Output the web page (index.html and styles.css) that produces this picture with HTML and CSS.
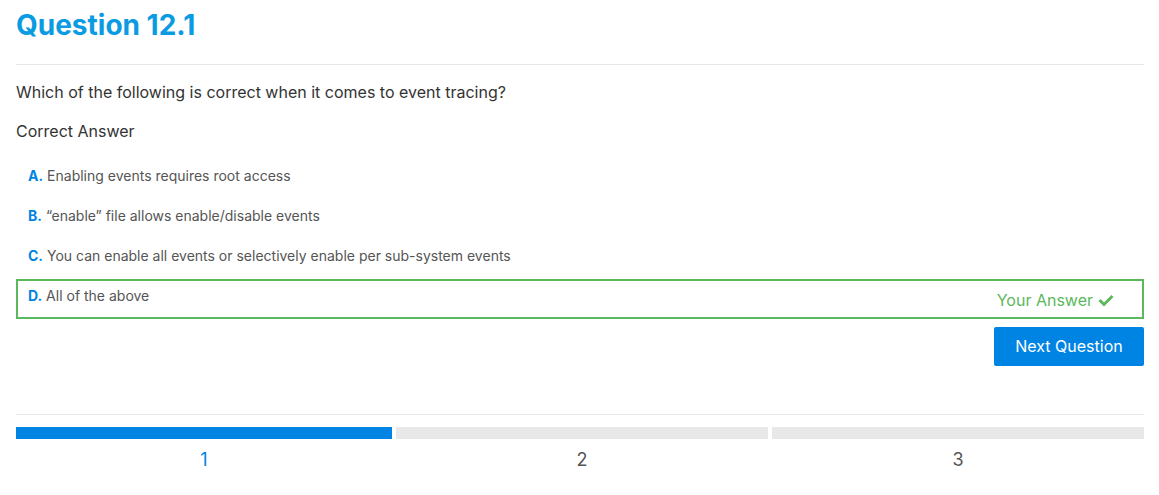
FILE: index.html
```html
<!DOCTYPE html>
<html>
<head>
<meta charset="utf-8">
<link rel="stylesheet" href="styles.css">
</head>
<body>
<div class="quiz">
  <header class="quiz-header">
    <h1 class="quiz-title">Question 12.1</h1>
  </header>
  <p class="question">Which of the following is correct when it comes to event tracing?</p>
  <p class="answer-label">Correct Answer</p>
  <ul class="options">
    <li class="option"><span class="option-text"><b class="letter">A.</b> Enabling events requires root access</span></li>
    <li class="option"><span class="option-text"><b class="letter">B.</b> “enable” file allows enable/disable events</span></li>
    <li class="option"><span class="option-text"><b class="letter">C.</b> You can enable all events or selectively enable per sub-system events</span></li>
    <li class="option option-selected"><span class="option-text"><b class="letter">D.</b> All of the above</span>
      <span class="your-answer">Your Answer
        <svg class="check" viewBox="0 0 16 16" width="16" height="16"><path d="M1.5 8 L6 12.5 L14.5 4" fill="none" stroke="#5cb85c" stroke-width="3" stroke-linecap="butt" stroke-linejoin="miter"/></svg>
      </span>
    </li>
  </ul>
  <div class="actions">
    <button class="next-btn">Next Question</button>
  </div>
  <div class="progress">
    <div class="step step-active"><div class="bar"></div><div class="num">1</div></div>
    <div class="step"><div class="bar"></div><div class="num">2</div></div>
    <div class="step"><div class="bar"></div><div class="num">3</div></div>
  </div>
</div>
</body>
</html>
```
FILE: styles.css
```css
* { box-sizing: border-box; }
html, body { margin: 0; padding: 0; background: #fff; }
body { font-family: Inter, "Noto Sans", sans-serif; color: #333; }
.quiz { padding: 0 15px 0 16px; }
.quiz-header { height: 65px; border-bottom: 1px solid #e6e6e6; padding-top: 7px; }
.quiz-title { margin: 0; font-size: 28px; line-height: 36px; font-weight: 700; color: #0a9be2; }
.question { margin: 15px 0 0; font-size: 16px; line-height: 24px; color: #333; }
.answer-label { margin: 15px 0 0; font-size: 16px; line-height: 24px; color: #333; }
.options { list-style: none; margin: 16px 0 0; padding: 0; }
.option { height: 40px; border: 2px solid transparent; padding: 5px 10px 0 10px; display: flex; justify-content: space-between; align-items: flex-start; font-size: 14px; line-height: 20px; color: #555; }
.option-selected { border-color: #5cb85c; }
.letter { color: #0084e3; font-weight: 700; }
.your-answer { font-size: 16px; line-height: 24px; color: #5cb85c; margin-top: 2px; margin-right: 18px; display: flex; align-items: center; gap: 5px; }
.check { display: block; }
.actions { display: flex; justify-content: flex-end; margin-top: 8px; }
.next-btn { height: 39px; width: 150px; background: #0084e3; color: #fff; border: none; border-radius: 2px; font-family: Inter, "Noto Sans", sans-serif; font-size: 16px; line-height: 20px; padding: 0 0 1px; }
.progress { margin-top: 48px; border-top: 1px solid #e6e6e6; padding-top: 12px; display: grid; grid-template-columns: repeat(3, 1fr); }
.step { padding-left: 4px; }
.step:first-child { padding-left: 0; }
.bar { height: 12px; background: #e8e8e8; }
.step-active .bar { background: #0084e3; }
.num { margin-top: 9px; text-align: center; font-size: 18px; line-height: 24px; color: #555; }
.step-active .num { color: #0084e3; }
```
